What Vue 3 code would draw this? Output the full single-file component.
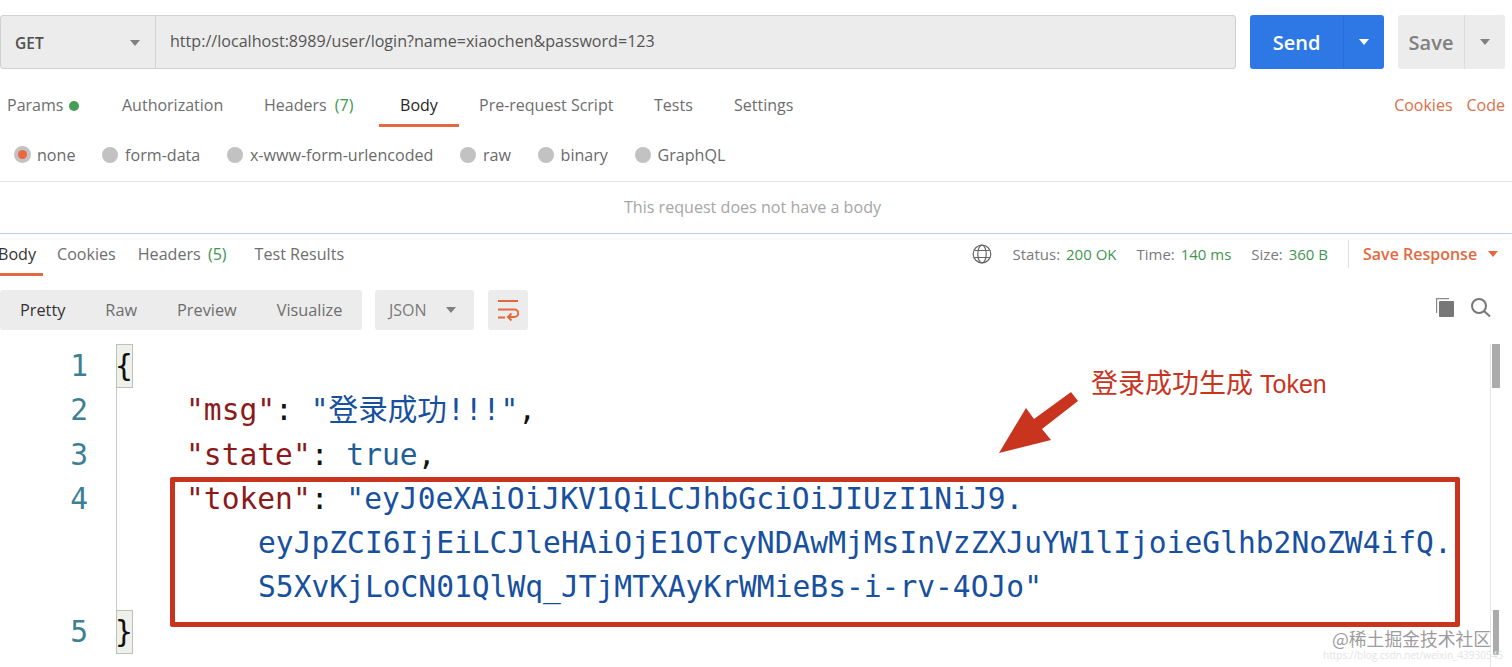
<script setup>
const radios = ['form-data', 'x-www-form-urlencoded', 'raw', 'binary', 'GraphQL']
const views = ['Raw', 'Preview', 'Visualize']
</script>

<template>
  <div class="page">
    <div class="urlbar">
      <div class="request">
        <div class="method"><b>GET</b><i class="caret grey"></i></div>
        <div class="url">http://localhost:8989/user/login?name=xiaochen&amp;password=123</div>
      </div>
      <div class="btn send"><span class="main">Send</span><span class="side"><i class="caret white"></i></span></div>
      <div class="btn save"><span class="main">Save</span><span class="side"><i class="caret grey"></i></span></div>
    </div>

    <div class="reqtabs">
      <span class="tab params">Params<i class="dot"></i></span>
      <span class="tab auth">Authorization</span>
      <span class="tab headers">Headers <em>(7)</em></span>
      <span class="tab active body">Body</span>
      <span class="tab pre">Pre-request Script</span>
      <span class="tab tests">Tests</span>
      <span class="tab">Settings</span>
      <span class="links"><span>Cookies</span><span>Code</span></span>
    </div>

    <div class="radios">
      <span class="radio on"><i class="ring"><i></i></i>none</span>
      <span v-for="r in radios" :key="r" class="radio"><i class="ring"></i>{{ r }}</span>
    </div>

    <div class="nobody">This request does not have a body</div>

    <div class="restabs">
      <span class="rtab active">Body</span>
      <span class="rtab">Cookies</span>
      <span class="rtab">Headers <em>(5)</em></span>
      <span class="rtab">Test Results</span>
      <div class="stats">
        <svg class="globe" width="20" height="20" viewBox="0 0 20 20" fill="none" stroke="#666" stroke-width="1.2">
          <circle cx="10" cy="10" r="8.8" />
          <ellipse cx="10" cy="10" rx="4.2" ry="8.8" />
          <path d="M2.500 6.500h15M2.500 13.500h15" />
        </svg>
        <span class="stat">Status: <em>200 OK</em></span>
        <span class="stat">Time: <em>140 ms</em></span>
        <span class="stat">Size: <em>360 B</em></span>
        <span class="saveresp">Save Response<i class="caret orange"></i></span>
      </div>
    </div>

    <div class="toolbar">
      <div class="views">
        <span class="view active">Pretty</span>
        <span v-for="v in views" :key="v" class="view">{{ v }}</span>
      </div>
      <div class="fmt">JSON<i class="caret grey"></i></div>
      <div class="wrap">
        <svg width="22" height="22" viewBox="0 0 22 22" fill="none" stroke="#e4693f" stroke-width="2">
          <path d="M1 2h20M1 10.500h16.500a3.750 3.750 0 0 1 0 7.500H11M1 18.500h7" />
          <path d="M14.500 14.500 11 18l3.500 3.500" />
        </svg>
      </div>
      <div class="tools">
        <svg width="20" height="20" viewBox="0 0 20 20">
          <path d="M1 1h13v1.200H2.200V16H1z" fill="#8a8a8a" />
          <rect x="4" y="4" width="15" height="16" fill="#777" rx="1" />
        </svg>
        <svg class="search" width="20" height="20" viewBox="0 0 20 20" fill="none" stroke="#777" stroke-width="2">
          <circle cx="8" cy="8" r="7" />
          <path d="m13 13 6 5.500" />
        </svg>
      </div>
    </div>

    <div class="code">
      <div class="gutter">
        <div>1</div><div>2</div><div>3</div><div>4</div><div class="g3"></div><div>5</div>
      </div>
      <div class="lines">
        <div class="ln"><span class="brace">{</span></div>
        <div class="ln in"><span class="k">"msg"</span>: <span class="s">"登录成功!!!"</span>,</div>
        <div class="ln in"><span class="k">"state"</span>: <span class="b">true</span>,</div>
        <div class="ln in"><span class="k">"token"</span>: <span class="s">"eyJ0eXAiOiJKV1QiLCJhbGciOiJIUzI1NiJ9.</span></div>
        <div class="ln in2"><span class="s">eyJpZCI6IjEiLCJleHAiOjE1OTcyNDAwMjMsInVzZXJuYW1lIjoieGlhb2NoZW4ifQ.</span></div>
        <div class="ln in2"><span class="s">S5XvKjLoCN01QlWq_JTjMTXAyKrWMieBs-i-rv-4OJo"</span></div>
        <div class="ln"><span class="brace">}</span></div>
      </div>
    </div>

    <div class="track"></div>
    <div class="thumb t1"></div>
    <div class="thumb t2"></div>

    <div class="redbox"></div>
    <svg class="arrow" width="90" height="70" viewBox="0 0 90 70">
      <path d="M74 2 81 11 45 39 54 50 2 63 29 18 37 29z" fill="#c9341f" />
    </svg>
    <div class="note">登录成功生成 <span>Token</span></div>
    <div class="mark">@稀土掘金技术社区</div>
    <div class="mark2">https://blog.csdn.net/weixin_43930545</div>
  </div>
</template>

<style>
html, body { margin: 0; background: #fff; overflow: hidden; }
</style>

<style scoped>
.page {
  position: relative;
  width: 1512px;
  height: 667px;
  overflow: hidden;
  background: #fff;
  font-family: "Open Sans", sans-serif;
  font-size: 16px;
  color: #6b6b6b;
}
i, em, b { font-style: normal; }
em { color: #3f9652; }
.caret {
  display: inline-block;
  width: 0;
  height: 0;
  border-left: 5px solid transparent;
  border-right: 5px solid transparent;
  border-top: 6px solid;
}
.caret.grey { border-top-color: #808080; }
.caret.white { border-top-color: #fff; }
.caret.orange { border-top-color: #e4693f; }

.urlbar { display: flex; height: 54px; padding-top: 15px; }
.request {
  display: flex;
  width: 1236px;
  box-sizing: border-box;
  background: #ececec;
  border: 1px solid #d0d0d0;
  border-radius: 3px;
  color: #555;
}
.method {
  width: 155px;
  box-sizing: border-box;
  padding: 1px 15px 0 14px;
  display: flex;
  align-items: center;
  justify-content: space-between;
  border-right: 1px solid #d4d4d4;
  font-size: 15.500px;
}
.method b { font-weight: 600; color: #505050; }
.url { padding-left: 14px; line-height: 51px; font-size: 16.100px; }
.btn {
  display: flex;
  border-radius: 3px;
  font-size: 20px;
  font-weight: 600;
  align-items: stretch;
  line-height: 56px;
}
.send { width: 134px; margin-left: 14px; background: #2d78e4; color: #fff; }
.send .main { width: 93px; text-align: center; }
.send .side { flex: 1; border-left: 1px solid #2a6fd3; display: flex; align-items: center; justify-content: center; }
.save { width: 107px; margin-left: 14px; background: #ececec; color: #808080; }
.save .main { width: 66px; text-align: center; }
.save .side { flex: 1; border-left: 1px solid #dcdcdc; display: flex; align-items: center; justify-content: center; }

.reqtabs {
  display: flex;
  height: 42px;
  margin-top: 16px;
  padding-left: 7px;
  box-sizing: border-box;
  line-height: 40px;
  color: #6e6e6e;
}
.tab { display: block; height: 42px; box-sizing: border-box; white-space: nowrap; }
.tab em { margin-left: 4px; }
.dot { display: inline-block; width: 10px; height: 10px; border-radius: 50%; background: #479d57; margin-left: 6px; }
.params { width: 115px; }
.auth { width: 142px; }
.headers { width: 115px; }
.tab.active { color: #262626; }
.body { width: 80px; text-align: center; border-bottom: 3px solid #e4693f; margin-right: 20px; }
.pre { width: 175px; }
.tests { width: 80px; }
.links { margin-left: auto; display: flex; gap: 14px; color: #dc7048; margin-right: 7px; }

.radios {
  display: flex;
  align-items: center;
  height: 55px;
  padding-left: 14px;
  padding-top: 1px;
  box-sizing: border-box;
  border-bottom: 1px solid #e3e3e3;
  gap: 26.600px;
  color: #6a6a6a;
  font-size: 16.100px;
}
.radio { display: flex; align-items: center; gap: 7px; white-space: nowrap; }
.radio.on { gap: 6px; }
.ring { width: 16px; height: 16px; border-radius: 50%; background: #c2c2c2; display: flex; align-items: center; justify-content: center; }
.on .ring { width: 17px; height: 17px; }
.ring i { width: 9px; height: 9px; border-radius: 50%; background: #e8693f; }

.nobody {
  height: 51px;
  line-height: 50px;
  text-align: center;
  color: #a6a6a6;
  width: 1505px;
  font-size: 16.100px;
}
.restabs {
  display: flex;
  height: 42px;
  margin-left: -2px;
  border-top: 1px solid #b5cdee;
  width: 1514px;
  line-height: 40px;
  color: #6e6e6e;
}
.rtab { display: block; height: 42px; box-sizing: border-box; margin-right: 22px; font-size: 16.100px; white-space: nowrap; }
.rtab em { margin-left: 3px; }
.rtab.active { color: #333; width: 45px; margin-right: 14px; border-bottom: 3px solid #e4693f; }
.rtab:nth-child(3) { margin-right: 28px; }
.stats { margin-left: auto; display: flex; align-items: center; height: 40px; color: #7a7a7a; font-size: 15px; white-space: nowrap; }
.globe { margin-right: 21px; }
.stat { margin-right: 20px; }
.stat em { margin-left: 2px; }
.saveresp {
  border-left: 1px solid #e0e0e0;
  padding-left: 14px;
  height: 28px;
  line-height: 28px;
  width: 164px;
  box-sizing: border-box;
  color: #e4693f;
  font-weight: 600;
  font-size: 16px;
  display: flex;
  align-items: center;
  gap: 11px;
}

.toolbar { display: flex; height: 40px; margin-top: 14px; align-items: stretch; position: relative; }
.views { display: flex; width: 362px; background: #ececec; border-radius: 3px; align-items: center; line-height: 40px; font-size: 16.300px; }
.view { margin-left: 40px; color: #6e6e6e; }
.view.active { margin-left: 20px; color: #333; }
.fmt {
  width: 99px;
  margin-left: 13px;
  background: #ececec;
  border-radius: 3px;
  display: flex;
  align-items: center;
  padding: 0 18px 0 14px;
  box-sizing: border-box;
  justify-content: space-between;
  color: #7a7a7a;
}
.wrap { width: 40px; margin-left: 14px; background: #ececec; border-radius: 3px; display: flex; align-items: center; justify-content: center; }
.tools { margin-left: auto; display: flex; gap: 16px; margin-right: 21px; padding-top: 7px; align-items: flex-start; }
.search { margin-top: 1px; }

.code {
  display: flex;
  margin-top: 14px;
  font-family: "DejaVu Sans Mono", "Noto Sans CJK SC", monospace;
  font-size: 29.600px;
  line-height: 44.300px;
  color: #111;
}
.gutter { width: 88px; text-align: right; color: #3e7f93; flex: none; }
.g3 { height: 88.600px; }
.lines { margin-left: 28px; border-left: 1px solid #c8c8c8; }
.ln { height: 44.300px; white-space: pre; }
.in { padding-left: 69px; }
.in2 { padding-left: 141px; }
.brace {
  display: inline-block;
  width: 17px;
  height: 44px;
  margin-left: -1px;
  background: #eef0ea;
  border: 1px solid #bfbfbf;
  box-sizing: border-box;
  text-indent: -2px;
  overflow: hidden;
  line-height: 42px;
}
.k { color: #8c1a1a; }
.s { color: #17509e; }
.b { color: #1f5f96; }

.track { position: absolute; left: 1490px; top: 344px; bottom: 0; border-left: 1px solid #e6e6e6; }
.thumb { position: absolute; background: #ababab; }
.t1 { left: 1492px; top: 344px; width: 8px; height: 44px; }
.t2 { left: 1493px; top: 610px; width: 6px; height: 45px; }

.redbox {
  position: absolute;
  left: 170px;
  top: 477px;
  width: 1290px;
  height: 150px;
  box-sizing: border-box;
  border: 5.500px solid #c9341f;
  border-radius: 2px;
}
.arrow { position: absolute; left: 997px; top: 390px; }
.note {
  position: absolute;
  left: 1091px;
  top: 364px;
  color: #c9341f;
  font-size: 27px;
  line-height: 36px;
  font-family: "Noto Sans CJK SC", sans-serif;
  white-space: nowrap;
}
.note span { font-family: "Liberation Sans", sans-serif; font-size: 25px; margin-left: 1px; }
.mark {
  position: absolute;
  left: 1332px;
  top: 627px;
  color: #9c9c9c;
  font-size: 17.800px;
  line-height: 22px;
  font-family: "Noto Sans CJK SC", sans-serif;
  white-space: nowrap;
}
.mark2 {
  position: absolute;
  left: 1323px;
  top: 649px;
  color: #e4e4e4;
  font-size: 10px;
  line-height: 12px;
  white-space: nowrap;
}
</style>
